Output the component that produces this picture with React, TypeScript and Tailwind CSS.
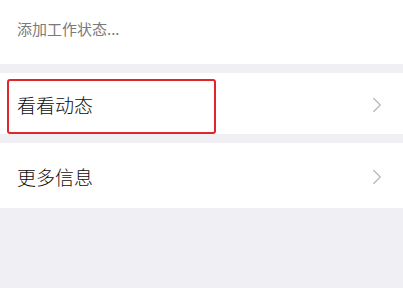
import { ChevronRight } from "lucide-react"

const font = { fontFamily: '"Noto Sans CJK SC", "Noto Sans", sans-serif' }

function Row({ label, highlight, tall }: { label: string; highlight?: boolean; tall?: boolean }) {
  return (
    <div
      className={`relative flex items-center justify-between bg-white pl-[17px] pr-[13px] pt-[3px] ${tall ? "h-[65px]" : "h-[61px]"}`}
    >
      {highlight && (
        <div className="pointer-events-none absolute left-[7px] top-[6px] h-[55px] w-[209px] rounded-[3px] border-[2.5px] border-[#e1262a]" />
      )}
      <span className="text-[19px] font-light text-[#0d0d0d]">{label}</span>
      <ChevronRight size={26} strokeWidth={1.2} className="text-[#b8b8b8]" />
    </div>
  )
}

export default function App() {
  return (
    <div className="h-[288px] w-[403px] bg-[#f0f0f4]" style={font}>
      <div className="flex h-[64px] items-start bg-white pl-[17px] pt-[18px]">
        <span className="text-[15px] text-[#7a7a7a]">添加工作状态...</span>
      </div>
      <div className="h-[9px]" />
      <Row label="看看动态" highlight />
      <div className="h-[9px]" />
      <Row label="更多信息" tall />
    </div>
  )
}
